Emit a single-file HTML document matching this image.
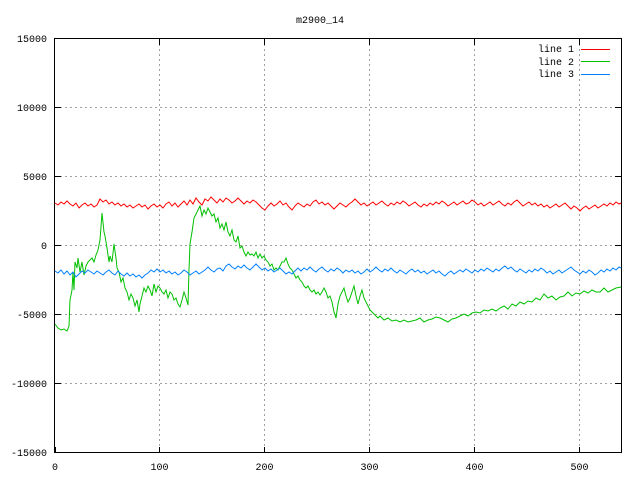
<!DOCTYPE html>
<html><head><meta charset="utf-8"><style>
html,body{margin:0;padding:0;background:#fff;}
svg{display:block;}
text{font-family:"Liberation Mono",monospace;font-size:10px;fill:#000;}
</style></head><body>
<svg width="640" height="480" xmlns="http://www.w3.org/2000/svg">
<rect width="640" height="480" fill="#fff"/>
<g stroke="#a0a0a0" stroke-width="1" stroke-dasharray="2,3" fill="none">
<path d="M55 107.5H621M55 176.5H621M55 245.5H621M55 314.5H621M55 383.5H621"/>
<path d="M159.5 39V453M264.5 39V453M369.5 39V453M474.5 39V453M579.5 39V453"/>
</g>
<g stroke="#000" stroke-width="1">
<path d="M54.5 38.5H621.5V452.5H54.5Z" fill="none"/>
<path d="M55 107.5h6M55 176.5h6M55 245.5h6M55 314.5h6M55 383.5h6M615 107.5h6M615 176.5h6M615 245.5h6M615 314.5h6M615 383.5h6"/>
<path d="M55.5 453v-6M159.5 453v-6M264.5 453v-6M369.5 453v-6M474.5 453v-6M579.5 453v-6M159.5 39v6M264.5 39v6M369.5 39v6M474.5 39v6M579.5 39v6"/>
</g>
<text x="320" y="23" text-anchor="middle">m2900_14</text>
<g text-anchor="end">
<text x="47" y="42">15000</text>
<text x="47" y="111">10000</text>
<text x="47" y="180">5000</text>
<text x="47" y="249">0</text>
<text x="47" y="318">-5000</text>
<text x="47" y="387">-10000</text>
<text x="47" y="456">-15000</text>
</g>
<g text-anchor="middle">
<text x="55" y="470">0</text>
<text x="159.5" y="470">100</text>
<text x="264.5" y="470">200</text>
<text x="369.5" y="470">300</text>
<text x="474.5" y="470">400</text>
<text x="579.5" y="470">500</text>
</g>
<g text-anchor="end">
<text x="574" y="52">line 1</text>
<text x="574" y="65">line 2</text>
<text x="574" y="77">line 3</text>
</g>
<rect x="581" y="49" width="29" height="1" fill="#ff0000"/>
<rect x="581" y="61" width="29" height="1" fill="#00c000"/>
<rect x="581" y="74" width="29" height="1" fill="#0080ff"/>
<polyline fill="none" stroke="#ff0000" stroke-width="1" points="55,203 58,205 61,202 64,204 67,201 70,204 73,206 76,203 79,208 82,205 85,203 88,206 91,204 94,207 97,205 100,199 103,202 106,200 109,204 112,202 115,205 118,203 121,206 124,204 127,207 130,205 133,208 136,206 139,204 142,207 145,205 148,209 151,206 154,204 157,207 160,205 163,208 166,204 169,202 172,206 175,203 178,207 181,204 184,201 187,205 190,200 193,204 196,198 199,202 202,205 205,199 208,201 211,197 214,200 217,203 220,199 223,202 226,198 229,200 232,203 235,201 238,198 241,201 244,204 247,201 250,203 253,200 256,202 259,205 262,208 265,210 268,206 271,203 274,206 277,204 280,201 283,205 286,203 289,207 292,210 295,206 298,203 301,205 304,207 307,204 310,206 313,202 316,200 319,204 322,202 325,205 328,203 331,206 334,209 337,206 340,203 343,205 346,207 349,204 352,202 355,199 358,202 361,205 364,203 367,206 370,204 373,202 376,205 379,203 382,201 385,204 388,206 391,203 394,205 397,202 400,204 403,201 406,203 409,206 412,204 415,202 418,205 421,207 424,204 427,206 430,203 433,205 436,202 439,204 442,201 445,203 448,206 451,204 454,202 457,205 460,203 463,201 466,204 469,203 472,200 475,202 478,205 481,203 484,206 487,204 490,202 493,205 496,203 499,201 502,204 505,206 508,203 511,205 514,202 517,200 520,203 523,206 526,204 529,202 532,205 535,203 538,206 541,204 544,207 547,205 550,208 553,206 556,204 559,207 562,205 565,203 568,206 571,209 574,206 577,208 580,211 583,208 586,206 589,209 592,207 595,205 598,208 601,206 604,204 607,206 610,203 613,205 616,202 619,204 621,203"/>
<polyline fill="none" stroke="#00c000" stroke-width="1" points="55,324 58,328 61,330 64,329 67,331 69,326 70,300 72,290 73,272 74,290 75,262 77,268 78,258 80,272 82,262 84,275 86,266 88,262 90,260 92,258 94,262 96,255 98,250 100,240 102,213 104,232 105,236 107,248 109,262 110,256 112,262 114,244 116,258 117,268 119,272 121,282 123,278 125,288 127,292 129,300 131,294 133,298 135,306 137,300 139,312 140,304 142,296 144,288 146,292 148,286 150,290 152,296 154,284 156,292 158,286 160,288 162,292 164,294 166,290 168,298 170,292 172,294 174,300 176,298 178,304 180,307 182,300 184,292 186,298 188,305 189,270 190,244 192,232 194,218 196,214 198,210 200,206 202,216 204,210 206,214 208,208 210,212 212,216 214,214 216,222 218,218 220,228 222,224 224,230 226,222 228,232 230,236 232,230 234,240 236,242 238,236 240,248 242,246 244,252 246,256 248,252 250,255 252,254 254,256 256,252 258,258 260,254 262,258 264,256 266,260 268,262 270,266 272,264 274,270 276,268 278,270 280,266 282,262 284,262 286,258 288,264 290,268 292,270 294,274 296,278 298,276 300,280 302,282 304,286 306,288 308,286 310,290 312,292 314,290 316,294 318,292 320,295 322,292 324,288 326,292 328,298 330,296 332,302 334,312 336,318 338,304 340,296 342,292 344,288 346,296 348,302 350,298 352,292 354,286 356,296 358,304 360,296 362,290 364,298 366,302 368,306 370,310 372,312 374,314 376,316 378,318 380,316 384,320 388,318 392,321 396,320 400,322 404,320 408,322 412,321 416,320 420,318 424,322 428,320 432,319 436,317 440,318 444,320 448,322 452,319 456,318 460,316 464,314 468,316 472,313 476,312 480,313 484,310 488,311 492,309 496,311 500,308 504,306 508,309 512,304 516,306 520,302 524,304 528,301 532,302 536,298 540,300 544,294 548,298 552,296 556,300 560,297 564,296 568,292 572,296 576,293 580,294 584,291 588,293 592,290 596,292 600,292 604,288 608,292 612,290 616,288 621,287"/>
<polyline fill="none" stroke="#0080ff" stroke-width="1" points="55,271 58,273 61,270 64,274 67,271 70,275 73,272 76,277 79,274 82,271 85,273 88,270 91,272 94,274 97,271 100,273 103,275 106,272 109,270 112,273 115,275 118,271 121,274 124,276 127,273 130,276 133,274 136,277 139,275 142,278 145,275 148,273 151,270 154,272 157,269 160,272 163,270 166,273 169,271 172,274 175,272 178,275 181,273 184,270 187,272 190,275 193,273 196,271 199,274 202,272 205,270 208,267 211,270 214,272 217,269 220,268 223,271 226,266 229,264 232,267 235,269 238,266 241,268 244,265 247,268 250,270 253,267 256,264 259,267 262,270 265,268 268,271 271,269 274,272 277,270 280,268 283,271 286,274 289,272 292,274 295,271 298,268 301,271 304,268 307,270 310,267 313,270 316,272 319,269 322,267 325,270 328,272 331,269 334,271 337,268 340,270 343,273 346,270 349,272 352,270 355,273 358,271 361,274 364,272 367,269 370,272 373,270 376,267 379,270 382,272 385,269 388,271 391,268 394,271 397,273 400,270 403,272 406,274 409,271 412,269 415,272 418,270 421,273 424,271 427,274 430,272 433,270 436,273 439,271 442,274 445,276 448,273 451,271 454,274 457,272 460,270 463,272 466,269 469,271 472,273 475,270 478,272 481,269 484,271 487,268 490,270 493,272 496,269 499,271 502,268 505,266 508,269 511,267 514,270 517,272 520,269 523,271 526,273 529,270 532,272 535,269 538,271 541,268 544,270 547,273 550,271 553,274 556,272 559,270 562,273 565,271 568,269 571,267 574,270 577,272 580,274 583,271 586,273 589,270 592,272 595,275 598,273 601,270 604,272 607,269 610,271 613,268 616,270 619,267 621,268"/>
</svg>
</body></html>
